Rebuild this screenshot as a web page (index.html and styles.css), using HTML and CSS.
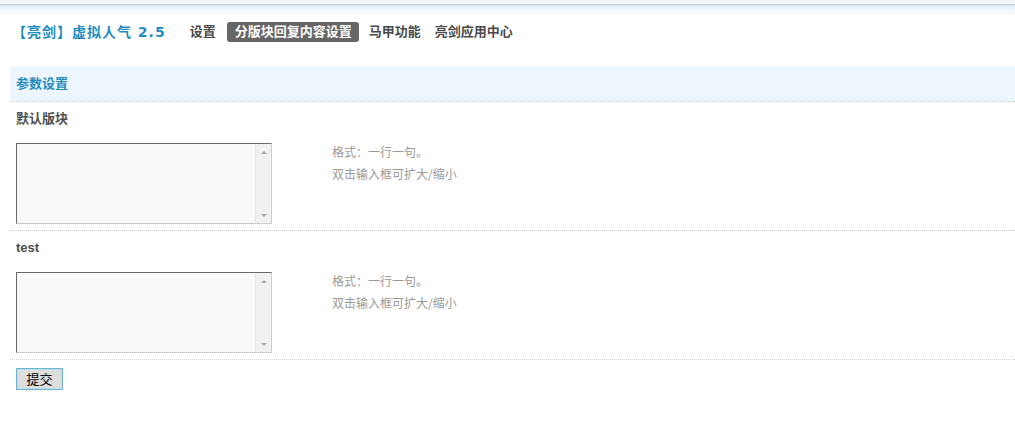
FILE: index.html
```html
<!DOCTYPE html>
<html lang="zh-CN">
<head>
<meta charset="utf-8">
<title>亮剑 虚拟人气</title>
<link rel="stylesheet" href="styles.css">
</head>
<body>
<div class="topband"></div>
<div class="nav">
  <span class="brand">【亮剑】虚拟人气 2.5</span>
  <a class="navitem first">设置</a>
  <a class="navitem active">分版块回复内容设置</a>
  <a class="navitem">马甲功能</a>
  <a class="navitem last">亮剑应用中心</a>
</div>
<div class="main">
  <div class="sechead">参数设置</div>
  <div class="row">
    <div class="label">默认版块</div>
    <div class="field">
      <div class="tabox">
        <textarea class="ta"></textarea>
        <div class="sbar"><span class="arr up"></span><span class="arr down"></span></div>
      </div>
      <div class="hint">格式：一行一句。<br>双击输入框可扩大/缩小</div>
    </div>
  </div>
  <div class="row">
    <div class="label">test</div>
    <div class="field">
      <div class="tabox">
        <textarea class="ta"></textarea>
        <div class="sbar"><span class="arr up"></span><span class="arr down"></span></div>
      </div>
      <div class="hint">格式：一行一句。<br>双击输入框可扩大/缩小</div>
    </div>
  </div>
  <div class="actions"><button class="btn">提交</button></div>
</div>
</body>
</html>
```

FILE: styles.css
```css
html, body {
  margin: 0;
  padding: 0;
  background: #fff;
}
body {
  font-family: "DejaVu Sans", "Noto Sans CJK SC", sans-serif;
  font-size: 12px;
  color: #555;
}
.topband {
  height: 16px;
  background: linear-gradient(to bottom, #f3f7f9 0, #f3f7f9 4px, #c4d3dc 4px, #c4d3dc 5px, #e6f1f9 6px, #ffffff 16px);
}
.nav {
  display: flex;
  align-items: center;
  height: 20px;
  margin: 6px 0 24px 12px;
}
.brand {
  font-size: 14px;
  font-weight: bold;
  color: #1f8cbf;
  line-height: 20px;
  letter-spacing: 1px;
  margin-right: 16px;
  white-space: pre;
}
.navitem {
  font-size: 13px;
  font-weight: bold;
  color: #4a4a4a;
  line-height: 20px;
  padding: 0 8px;
  border-radius: 3px;
  margin-right: 2px;
}
.navitem.active {
  background: #666;
  color: #fff;
  margin-left: 1px;
  padding: 0 7px 0 8px;
}
.navitem.last {
  margin-left: -4px;
}
.main {
  margin-left: 10px;
}
.sechead {
  height: 35px;
  line-height: 35px;
  background: #eef6fd;
  border-bottom: 1px dotted #c8cdd2;
  padding-left: 6px;
  font-size: 13px;
  font-weight: bold;
  color: #1f8cbf;
}
.row {
  padding: 8px 0 6px 6px;
  border-bottom: 1px dotted #cfd3d6;
}
.label {
  font-family: "Liberation Sans", "Noto Sans CJK SC", sans-serif;
  font-size: 13px;
  font-weight: bold;
  line-height: 17px;
  color: #4e4e4e;
}
.field {
  display: flex;
  align-items: flex-start;
  margin-top: 16px;
}
.tabox {
  display: flex;
  width: 254px;
  height: 79px;
  border: 1px solid #ccc;
  border-top-color: #6a6a6a;
  border-left-color: #6a6a6a;
  background: #f9f9f9;
}
.ta {
  flex: 1;
  border: 0;
  margin: 0;
  padding: 2px;
  background: #f9f9f9;
  resize: none;
  overflow: hidden;
  outline: none;
  font-family: inherit;
  font-size: 12px;
}
.sbar {
  width: 15px;
  border-left: 1px solid #e6e6e6;
  background: #f1f1f1;
  display: flex;
  flex-direction: column;
  justify-content: space-between;
  align-items: center;
  padding: 7px 0 6px;
}
.arr {
  width: 0;
  height: 0;
  border-left: 3px solid transparent;
  border-right: 3px solid transparent;
}
.arr.up {
  border-bottom: 3px solid #a8a8a8;
}
.arr.down {
  border-top: 3px solid #a8a8a8;
}
.hint {
  margin-left: 60px;
  margin-top: -2px;
  line-height: 22px;
  color: #9a9a9a;
  font-family: "Noto Sans CJK SC", sans-serif;
}
.actions {
  padding: 8px 0 0 6px;
}
.btn {
  width: 47px;
  height: 22px;
  padding: 0;
  background: #dedede;
  border: 1px solid #6fb2cb;
  box-shadow: inset 0 0 0 1px #b9e0ee;
  font-family: "Noto Sans CJK SC", sans-serif;
  font-size: 13px;
  color: #000;
  line-height: 20px;
}
```
